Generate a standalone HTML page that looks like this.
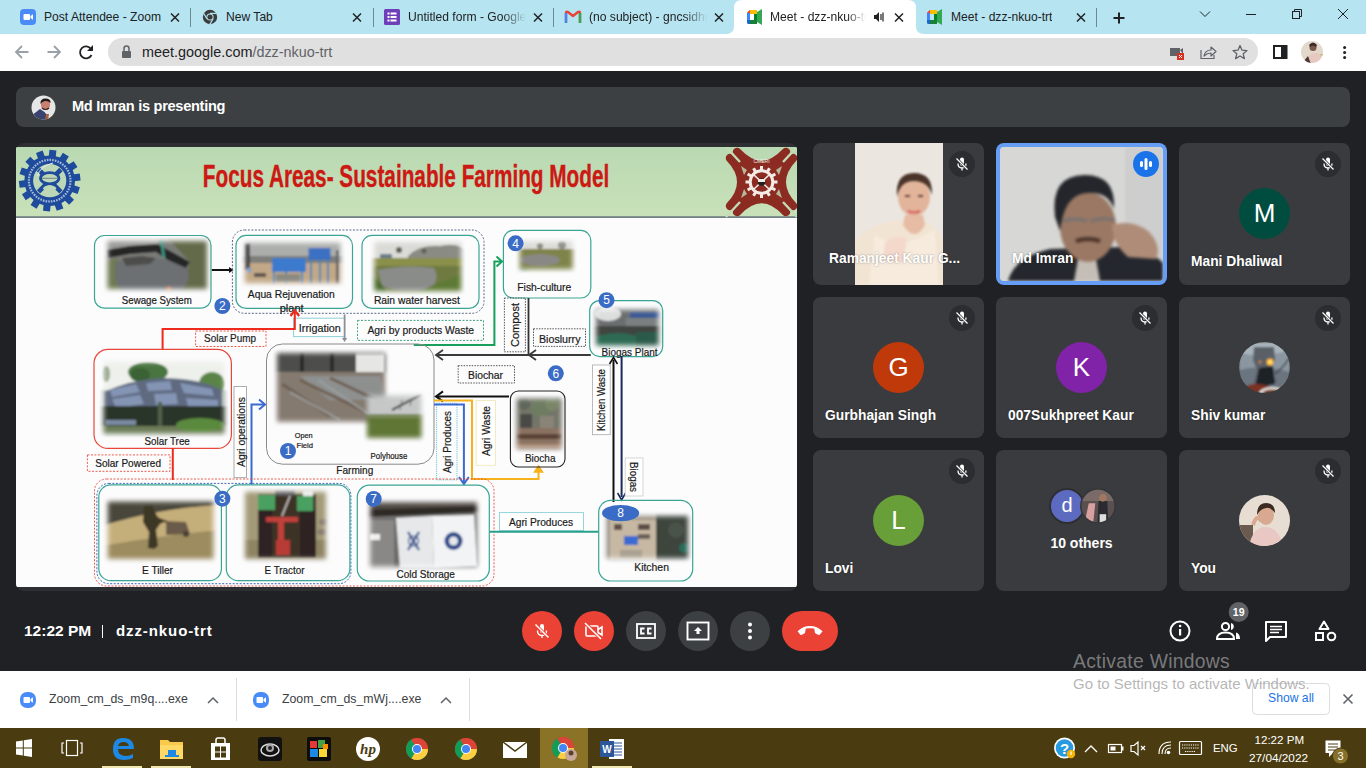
<!DOCTYPE html>
<html><head><meta charset="utf-8">
<style>
*{margin:0;padding:0;box-sizing:border-box}
html,body{width:1366px;height:768px;overflow:hidden;background:#202124;font-family:"Liberation Sans",sans-serif}
.abs{position:absolute}
#tabs{position:absolute;left:0;top:0;width:1366px;height:34px;background:#b6e5f1}
#toolbar{position:absolute;left:0;top:34px;width:1366px;height:36px;background:#fff}
#meet{position:absolute;left:0;top:70px;width:1366px;height:601px;background:#202124}
#shelf{position:absolute;left:0;top:671px;width:1366px;height:57px;background:#fff}
#taskbar{position:absolute;left:0;top:728px;width:1366px;height:40px;background:#4a3c10}
.tabt{position:absolute;top:10px;font-size:12.1px;color:#202124;white-space:nowrap;overflow:hidden;line-height:14px}
.fade{-webkit-mask-image:linear-gradient(90deg,#000 80%,transparent 100%)}
.x{position:absolute;top:10px;width:12px;height:12px}
.sep{position:absolute;top:8px;width:1px;height:20px;background:#5f7f88}
.tile{position:absolute;width:171px;height:142px;background:#3a3b3e;border-radius:8px;overflow:hidden}
.name{position:absolute;color:#fff;font-weight:bold;font-size:13.8px;white-space:nowrap;text-shadow:0 0 2px rgba(0,0,0,.4)}
.mic{position:absolute;right:9px;top:8px;width:26px;height:26px;border-radius:50%;background:#2e3134}
.av{position:absolute;left:60px;top:45px;width:51px;height:51px;border-radius:50%;color:#fff;font-size:26px;text-align:center;line-height:51px}
.ctl{position:absolute;top:540px;width:40px;height:40px;border-radius:50%;background:#3c4043}
</style></head><body>
<div id="tabs">
  <svg class="abs" style="left:0;top:0" width="1366" height="34">
    <!-- active tab -->
    <path d="M726,34 Q734,34 734,26 L734,8 Q734,0 742,0 L908,0 Q916,0 916,8 L916,26 Q916,34 924,34 Z" fill="#fff"/>
    <!-- separators -->
    <rect x="190" y="8" width="1" height="19" fill="#6c8a92"/>
    <rect x="373" y="8" width="1" height="19" fill="#6c8a92"/>
    <rect x="553" y="8" width="1" height="19" fill="#6c8a92"/>
    <rect x="1096" y="8" width="1" height="19" fill="#6c8a92"/>
    <!-- zoom icon -->
    <rect x="20" y="9" width="16" height="16" rx="4" fill="#4a8cf7"/>
    <rect x="23.5" y="14" width="6.5" height="6" rx="1" fill="#fff"/><path d="M30.5,16 L33,14.2 L33,19.8 L30.5,18 Z" fill="#fff"/>
    <!-- chrome gray -->
    <circle cx="210" cy="17" r="7.2" fill="#3c3c3c"/><circle cx="210" cy="17" r="3.6" fill="#b6e5f1"/><circle cx="210" cy="17" r="2.6" fill="#3c3c3c"/>
    <path d="M210,13.4 L216.5,13.4" stroke="#b6e5f1" stroke-width="1.2"/><path d="M206.9,18.8 L203.6,13.2" stroke="#b6e5f1" stroke-width="1.2"/><path d="M213.1,18.8 L209.8,24.4" stroke="#b6e5f1" stroke-width="1.2"/>
    <!-- forms -->
    <rect x="384" y="9" width="16" height="16" rx="1.5" fill="#6e3fb8"/>
    <rect x="387.5" y="12.5" width="2" height="2" fill="#fff"/><rect x="390.5" y="12.5" width="6" height="2" fill="#fff"/>
    <rect x="387.5" y="16" width="2" height="2" fill="#fff"/><rect x="390.5" y="16" width="6" height="2" fill="#fff"/>
    <rect x="387.5" y="19.5" width="2" height="2" fill="#fff"/><rect x="390.5" y="19.5" width="6" height="2" fill="#fff"/>
    <!-- gmail -->
    <path d="M566,23 L566,13 Q566,11 568,12 L573,16 L578,12 Q580,11 580,13 L580,23" fill="none" stroke="#ea4335" stroke-width="2.4" stroke-linejoin="round"/>
    <path d="M566,13 L566,23" stroke="#4285f4" stroke-width="2.4"/><path d="M580,13 L580,23" stroke="#34a853" stroke-width="2.4"/>
    <!-- meet icons -->
    <g id="mt" transform="translate(747,10)">
      <path d="M0,3 L3,0 L10,0 L10,4 L3,4 L3,10 L0,10 Z" fill="#ea4335"/>
      <path d="M3,0 L10,0 L10,4 L3,4 Z" fill="#fbbc04"/>
      <path d="M0,3 L3,3 L3,10 L0,10 Z" fill="#4285f4"/>
      <path d="M0,10 L10,10 L10,14 L2,14 Q0,14 0,12 Z" fill="#188038"/>
      <path d="M0,10 L3,10 L3,14 L2,14 Q0,14 0,12 Z" fill="#1967d2"/>
      <path d="M10,4 L10,10 L7,10 L7,4 Z" fill="#00832d"/>
      <path d="M10,2 L15,-1 L15,15 L10,12 Z" fill="#34a853"/>
      <path d="M3,0 L0,3 L3,3 Z" fill="#ea4335"/>
    </g>
    <use href="#mt" x="180" y="0"/>
    <!-- close X's -->
    <g stroke="#202124" stroke-width="1.5">
      <path d="M171,13.5 L179,21.5 M179,13.5 L171,21.5"/>
      <path d="M353,13.5 L361,21.5 M361,13.5 L353,21.5"/>
      <path d="M534,13.5 L542,21.5 M542,13.5 L534,21.5"/>
      <path d="M715,13.5 L723,21.5 M723,13.5 L715,21.5"/>
      <path d="M895,13.5 L903,21.5 M903,13.5 L895,21.5"/>
      <path d="M1077,13.5 L1085,21.5 M1085,13.5 L1077,21.5"/>
    </g>
    <!-- speaker -->
    <path d="M874,15 L876,15 L879,12 L879,22 L876,19 L874,19 Z" fill="#202124"/>
    <path d="M881,14 L881,20 M883,12.5 L883,21.5" stroke="#202124" stroke-width="1.2"/>
    <!-- plus -->
    <path d="M1119,12.5 L1119,23.5 M1113.5,18 L1124.5,18" stroke="#202124" stroke-width="2"/>
    <!-- window controls -->
    <path d="M1200,11.5 L1205,16.5 L1210,11.5" fill="none" stroke="#202124" stroke-width="1"/>
    <path d="M1246,14.5 L1256,14.5" stroke="#202124" stroke-width="1"/>
    <rect x="1292.5" y="11.5" width="7" height="7" fill="none" stroke="#202124" stroke-width="1"/>
    <path d="M1294.5,11.5 L1294.5,9.5 L1301.5,9.5 L1301.5,16.5 L1299.5,16.5" fill="none" stroke="#202124" stroke-width="1"/>
    <path d="M1338,9 L1348,19 M1348,9 L1338,19" stroke="#202124" stroke-width="1"/>
  </svg>
  <div class="tabt" style="left:44px;width:120px">Post Attendee - Zoom</div>
  <div class="tabt" style="left:226px">New Tab</div>
  <div class="tabt fade" style="left:408px;width:118px">Untitled form - Google Forms</div>
  <div class="tabt fade" style="left:589px;width:118px">(no subject) - gncsidhu@gmail.com</div>
  <div class="tabt fade" style="left:770px;width:96px">Meet - dzz-nkuo-trt</div>
  <div class="tabt" style="left:951px">Meet - dzz-nkuo-trt</div>
</div>
<div id="toolbar">
  <svg class="abs" style="left:0;top:0" width="1366" height="36">
    <path d="M28.5,18 L16,18 M22,12 L16,18 L22,24" fill="none" stroke="#9aa0a6" stroke-width="1.8"/>
    <path d="M47.5,18 L60,18 M54,12 L60,18 L54,24" fill="none" stroke="#9aa0a6" stroke-width="1.8"/>
    <path d="M91,15 A6,6 0 1 0 91.5,21" fill="none" stroke="#202124" stroke-width="1.8"/>
    <path d="M93,11 L93,17 L87,17 Z" fill="#202124"/>
    <rect x="108" y="4" width="1150" height="28" rx="14" fill="#e0e0e0"/>
    <rect x="122" y="17" width="9" height="7" rx="1" fill="#5f6368"/>
    <path d="M124,17 L124,14.5 A2.5,2.5 0 0 1 129,14.5 L129,17" fill="none" stroke="#5f6368" stroke-width="1.5"/>
    <rect x="1170" y="14" width="10" height="8" fill="#5f6368"/><path d="M1180,16 L1183,14 L1183,20" fill="#5f6368"/>
    <rect x="1177" y="19" width="7" height="7" fill="#d93025"/><path d="M1179,21 L1182,24 M1182,21 L1179,24" stroke="#fff" stroke-width="1"/>
    <path d="M1201,16 L1201,24.5 L1214,24.5 L1214,21" fill="none" stroke="#5f6368" stroke-width="1.2"/>
    <path d="M1204,22 Q1205,16 1211,16 L1211,13 L1216,17.5 L1211,22 L1211,19 Q1207,19 1204,22 Z" fill="none" stroke="#5f6368" stroke-width="1.2" stroke-linejoin="round"/>
    <path d="M1240,11.5 L1242,16.2 L1247,16.6 L1243.2,19.8 L1244.4,24.6 L1240,22 L1235.6,24.6 L1236.8,19.8 L1233,16.6 L1238,16.2 Z" fill="none" stroke="#5f6368" stroke-width="1.3" stroke-linejoin="round"/>
    <rect x="1274" y="12" width="12.5" height="12" fill="none" stroke="#202124" stroke-width="2"/><rect x="1281" y="12" width="6" height="12" fill="#202124"/>
    <defs><clipPath id="pav"><circle cx="1312" cy="18" r="11"/></clipPath><filter id="pbl"><feGaussianBlur stdDeviation="0.6"/></filter></defs>
    <g clip-path="url(#pav)"><g filter="url(#pbl)"><rect x="1300" y="6" width="24" height="24" fill="#e2d8cc"/>
    <path d="M1306,30 Q1308,20 1314,19 Q1322,19 1324,24 L1324,30 Z" fill="#e6c8c0"/>
    <circle cx="1313" cy="13.5" r="3.5" fill="#7a5848"/><path d="M1309,11 Q1313,6 1317,11 L1316,13 Q1313,10 1310,13 Z" fill="#3a2a28"/>
    <path d="M1303,28 L1308,22 L1311,30 Z" fill="#4a3a30"/><path d="M1320,20 L1324,20 L1324,24 Z" fill="#b8b070"/></g></g>
    <circle cx="1344.6" cy="13.5" r="1.5" fill="#202124"/><circle cx="1344.6" cy="18.5" r="1.5" fill="#202124"/><circle cx="1344.6" cy="23.5" r="1.5" fill="#202124"/>
  </svg>
  <div class="abs" style="left:142px;top:10px;font-size:14.4px;color:#202124;white-space:nowrap;line-height:17px">meet.google.com<span style="color:#5f6368">/dzz-nkuo-trt</span></div>
</div>
<div id="meet">
  <div class="abs" style="left:0;top:0;width:1366px;height:1px;background:#fff"></div>
  <div class="abs" style="left:16px;top:17px;width:1334px;height:40px;border-radius:8px;background:#3c4043"></div>
  <svg class="abs" style="left:31px;top:25px" width="25" height="25" viewBox="0 0 25 25">
    <defs><clipPath id="cav"><circle cx="12.5" cy="12.5" r="12"/></clipPath></defs>
    <circle cx="12.5" cy="12.5" r="12" fill="#e6e6e6"/>
    <g clip-path="url(#cav)" style="filter:blur(0.5px)"><path d="M0,21 L9,14 Q13,16 16,20 L15,26 L0,26 Z" fill="#3a4270"/><path d="M15,19 L18,19 L17,26 L14,26 Z" fill="#a86040"/><ellipse cx="14.5" cy="9.5" rx="4.6" ry="5.6" fill="#c88070"/><path d="M9.5,9 Q9,3.5 14.5,3.5 Q20,3.5 19.5,8 Q17,5.5 14,6 Q11,6.5 9.5,9Z" fill="#1e1a1a"/><path d="M11,13 Q14.5,16 18,13" stroke="#2a2020" stroke-width="1.2" fill="none"/></g>
  </svg>
  <div class="abs" style="left:72px;top:28px;font-size:14.6px;font-weight:bold;color:#fff;letter-spacing:-0.3px">Md Imran is presenting</div>
  <div class="abs" style="left:16px;top:73px;width:781px;height:448px;border-radius:8px;background:#2e2f32;overflow:hidden">
    <div id="slide" class="abs" style="left:0;top:4px;width:781px;height:440px;background:#fdfcfd;overflow:hidden"><svg class="abs" style="left:0;top:0" width="781" height="440" viewBox="16 147 781 440" font-family="Liberation Sans, sans-serif">
<defs><filter id="bl" x="-5%" y="-5%" width="110%" height="110%"><feGaussianBlur stdDeviation="0.9"/></filter><filter id="bl2"><feGaussianBlur stdDeviation="1"/></filter><filter id="sf" x="-20%" y="-20%" width="140%" height="140%"><feGaussianBlur stdDeviation="2.4"/></filter>
<linearGradient id="hg" x1="0" y1="0" x2="0" y2="1"><stop offset="0" stop-color="#b9d9b2"/><stop offset="1" stop-color="#c9e1b9"/></linearGradient>
<marker id="ab" markerWidth="8" markerHeight="8" refX="6" refY="4" orient="auto" markerUnits="userSpaceOnUse"><path d="M0,0 L6,4 L0,8" fill="none" stroke="context-stroke" stroke-width="1.6"/></marker>
</defs>
<rect x="16" y="147" width="781" height="440" fill="#fcfcfd"/>
<rect x="16" y="147" width="781" height="70" fill="url(#hg)"/>
<rect x="16" y="216.5" width="781" height="1.2" fill="#3d4a58"/>
<text x="202.8" y="187.4" font-size="31.5" font-weight="bold" fill="#cc1914" stroke="#cc1914" stroke-width="0.4" textLength="406.5" lengthAdjust="spacingAndGlyphs">Focus Areas- Sustainable Farming Model</text>
<g><rect x="46.2" y="150" width="7" height="9" fill="#1f4b9c" transform="rotate(6.0 49.7 180.7)"/><rect x="46.2" y="150" width="7" height="9" fill="#1f4b9c" transform="rotate(31.714285714285715 49.7 180.7)"/><rect x="46.2" y="150" width="7" height="9" fill="#1f4b9c" transform="rotate(57.42857142857143 49.7 180.7)"/><rect x="46.2" y="150" width="7" height="9" fill="#1f4b9c" transform="rotate(83.14285714285714 49.7 180.7)"/><rect x="46.2" y="150" width="7" height="9" fill="#1f4b9c" transform="rotate(108.85714285714286 49.7 180.7)"/><rect x="46.2" y="150" width="7" height="9" fill="#1f4b9c" transform="rotate(134.57142857142858 49.7 180.7)"/><rect x="46.2" y="150" width="7" height="9" fill="#1f4b9c" transform="rotate(160.28571428571428 49.7 180.7)"/><rect x="46.2" y="150" width="7" height="9" fill="#1f4b9c" transform="rotate(186.0 49.7 180.7)"/><rect x="46.2" y="150" width="7" height="9" fill="#1f4b9c" transform="rotate(211.71428571428572 49.7 180.7)"/><rect x="46.2" y="150" width="7" height="9" fill="#1f4b9c" transform="rotate(237.42857142857142 49.7 180.7)"/><rect x="46.2" y="150" width="7" height="9" fill="#1f4b9c" transform="rotate(263.14285714285717 49.7 180.7)"/><rect x="46.2" y="150" width="7" height="9" fill="#1f4b9c" transform="rotate(288.85714285714283 49.7 180.7)"/><rect x="46.2" y="150" width="7" height="9" fill="#1f4b9c" transform="rotate(314.57142857142856 49.7 180.7)"/><rect x="46.2" y="150" width="7" height="9" fill="#1f4b9c" transform="rotate(340.2857142857143 49.7 180.7)"/><circle cx="49.7" cy="180.7" r="25.3" fill="#1f4b9c"/><circle cx="49.7" cy="180.7" r="20.8" fill="none" stroke="#d6e2ee" stroke-width="2.2" stroke-dasharray="1.6,1.1" opacity="0.75"/><circle cx="49.7" cy="180.7" r="16.6" fill="#bcd8b6"/><path d="M38.5,169.5 L60.9,191.9 M60.9,169.5 L38.5,191.9" stroke="#1f4b9c" stroke-width="4.6"/><ellipse cx="49.7" cy="178.3" rx="9.2" ry="5.6" fill="#bcd8b6" stroke="#1f4b9c" stroke-width="2.8"/><path d="M42,178.3 L57.5,178.3" stroke="#6a7a8a" stroke-width="0.9"/><ellipse cx="49.7" cy="188.3" rx="6.5" ry="3" fill="#bcd8b6"/><path d="M37.5,176 Q40,166 53,163" fill="none" stroke="#e8eef0" stroke-width="1"/></g>
<g fill="none" stroke="#8c2b22" stroke-width="8.5" stroke-linecap="round"><path d="M737,152 Q761.5,178 786,152"/><path d="M730,158 Q753,182 730,206"/><path d="M793,158 Q770,182 793,206"/><path d="M737,212 Q761.5,186 786,212"/></g>
<path d="M737,152 Q761.5,178 786,152 L793,158 Q770,182 793,206 L786,212 Q761.5,186 737,212 L730,206 Q753,182 730,158 Z" fill="#8c2b22"/>
<path d="M741,166 L747,170 L744,175 Z M782,166 L776,170 L779,175 Z M741,198 L747,194 L744,189 Z M782,198 L776,194 L779,189 Z" fill="#c2dcb6" opacity="0.8"/>
<path d="M726,147 L740,162 M797,147 L783,162 M726,217 L740,202 M797,217 L783,202" stroke="#c2dcb6" stroke-width="2.4"/>
<rect x="760" y="166" width="3" height="4.5" fill="#f2ebe6" transform="rotate(0 761.5 182)"/><rect x="760" y="166" width="3" height="4.5" fill="#f2ebe6" transform="rotate(30 761.5 182)"/><rect x="760" y="166" width="3" height="4.5" fill="#f2ebe6" transform="rotate(60 761.5 182)"/><rect x="760" y="166" width="3" height="4.5" fill="#f2ebe6" transform="rotate(90 761.5 182)"/><rect x="760" y="166" width="3" height="4.5" fill="#f2ebe6" transform="rotate(120 761.5 182)"/><rect x="760" y="166" width="3" height="4.5" fill="#f2ebe6" transform="rotate(150 761.5 182)"/><rect x="760" y="166" width="3" height="4.5" fill="#f2ebe6" transform="rotate(180 761.5 182)"/><rect x="760" y="166" width="3" height="4.5" fill="#f2ebe6" transform="rotate(210 761.5 182)"/><rect x="760" y="166" width="3" height="4.5" fill="#f2ebe6" transform="rotate(240 761.5 182)"/><rect x="760" y="166" width="3" height="4.5" fill="#f2ebe6" transform="rotate(270 761.5 182)"/><rect x="760" y="166" width="3" height="4.5" fill="#f2ebe6" transform="rotate(300 761.5 182)"/><rect x="760" y="166" width="3" height="4.5" fill="#f2ebe6" transform="rotate(330 761.5 182)"/>
<circle cx="761.5" cy="182" r="12.8" fill="#f2ebe6"/><circle cx="761.5" cy="182" r="9.8" fill="#8c2b22"/><path d="M754,175 L769,189 M769,175 L754,189" stroke="#f2ebe6" stroke-width="1.6"/><circle cx="761.5" cy="182" r="3.8" fill="#222"/><rect x="758" y="179" width="7" height="3" fill="#f2ebe6"/>
<text x="761.5" y="163" font-size="5" fill="#f2ebe6" text-anchor="middle">CMERI</text>
<rect x="94.5" y="235.5" width="116.5" height="72.7" rx="10" fill="none" stroke="#3aa595" stroke-width="1.2"/>
<mask id="msw" maskUnits="userSpaceOnUse" x="95.5" y="229" width="123.5" height="72"><rect x="107.5" y="241" width="99.5" height="48" fill="#fff" filter="url(#sf)"/></mask>
<g mask="url(#msw)"><g filter="url(#bl)"><rect x="102.5" y="236" width="109.5" height="58" fill="#7a7a76"/><rect x="102" y="236" width="110" height="60" fill="#7a7a76"/><path d="M104,236 L160,236 L156,248 L104,254 Z" fill="#9a9a96"/><path d="M166,236 L212,236 L212,296 L176,296 Q186,276 190,262 Z" fill="#626a4a"/><path d="M104,262 L118,258 L122,296 L104,296 Z" fill="#6e7a52"/><path d="M116,262 Q150,252 186,266 Q194,280 178,294 L124,296 Q112,280 116,262 Z" fill="#6c7072"/><path d="M106,250 L130,246 L157,244 L172,252 L190,262 L186,268 L168,260 L156,252 L130,254 L108,258 Z" fill="#262626"/><path d="M122,258 L142,256 L156,258 L150,264 L126,266 Z" fill="#4e4e4c"/><path d="M161,238 L164,258" stroke="#3a9a88" stroke-width="2.5"/><circle cx="169" cy="289" r="2.5" fill="#c87a40"/></g></g>
<text x="121.8" y="304.4" font-size="11" fill="#1a1a1a" stroke="#1a1a1a" stroke-width="0.2" text-anchor="start" textLength="70" lengthAdjust="spacingAndGlyphs" >Sewage System</text>
<path d="M211.8,270 L232,270" stroke="#111" stroke-width="2"/><path d="M229,267 L233.5,270 L229,273 Z" fill="#111"/>
<rect x="232.4" y="230" width="251.6" height="83.3" rx="12" fill="none" stroke="#5a6a88" stroke-width="1" stroke-dasharray="2,1.5"/>
<rect x="236" y="235.4" width="116.5" height="73" rx="10" fill="none" stroke="#3aa595" stroke-width="1.2"/>
<mask id="maq" maskUnits="userSpaceOnUse" x="232.8" y="230.7" width="119.8" height="64.5"><rect x="244.8" y="242.7" width="95.8" height="40.5" fill="#fff" filter="url(#sf)"/></mask>
<g mask="url(#maq)"><g filter="url(#bl)"><rect x="239.8" y="237.7" width="105.8" height="50.5" fill="#b0a89a"/><rect x="240" y="238" width="106" height="22" fill="#acaeac"/><rect x="240" y="256" width="106" height="7" fill="#7e7e7a"/><rect x="240" y="263" width="106" height="25" fill="#c2a886"/><rect x="244" y="243" width="6" height="27" fill="#3a3a3a"/><rect x="272" y="258" width="34" height="14" fill="#3a7acc"/><path d="M274,272 L274,284 M286,272 L286,284 M302,272 L302,284" stroke="#3a8aba" stroke-width="2"/><rect x="276" y="274" width="24" height="8" fill="#8a8a80"/><rect x="308.5" y="248" width="22" height="12" fill="#3a70c2"/><path d="M311,260 L311,284 M320,260 L320,284 M328,260 L328,284" stroke="#3a88b4" stroke-width="2"/><rect x="336" y="250" width="3" height="34" fill="#5a5a5a"/><rect x="254" y="273" width="12" height="4" fill="#5a5550"/><circle cx="249" cy="270" r="2.5" fill="#7aa0c8"/></g></g>
<text x="247.8" y="298" font-size="11" fill="#1a1a1a" stroke="#1a1a1a" stroke-width="0.2" text-anchor="start" textLength="87" lengthAdjust="spacingAndGlyphs" >Aqua Rejuvenation</text>
<text x="291.7" y="312" font-size="11" fill="#1a1a1a" stroke="#1a1a1a" stroke-width="0.2" text-anchor="middle" textLength="24" lengthAdjust="spacingAndGlyphs" >plant</text>
<rect x="362" y="235.4" width="117" height="73" rx="10" fill="none" stroke="#3aa595" stroke-width="1.2"/>
<mask id="mrn" maskUnits="userSpaceOnUse" x="362.3" y="229.8" width="110.9" height="73.2"><rect x="374.3" y="241.8" width="86.9" height="49.2" fill="#fff" filter="url(#sf)"/></mask>
<g mask="url(#mrn)"><g filter="url(#bl)"><rect x="369.3" y="236.8" width="96.9" height="59.2" fill="#8a9a70"/><rect x="370" y="236" width="96" height="24" fill="#dadad6"/><path d="M408,256 Q420,244 440,246 Q456,242 466,250 L466,262 L408,262 Z" fill="#8a8c84"/><circle cx="399" cy="250" r="3" fill="#5a6050"/><circle cx="424" cy="251" r="2.5" fill="#5a6050"/><rect x="380" y="254" width="12" height="4" fill="#6a7a8a"/><rect x="370" y="258" width="96" height="8" fill="#8a9048"/><rect x="370" y="266" width="96" height="30" fill="#6e7a40"/><path d="M378,270 Q405,264 434,268 Q440,278 432,288 Q404,294 382,286 Z" fill="#8a8c8a"/><path d="M370,276 Q382,280 388,296 L370,296 Z" fill="#4a6a2c"/><path d="M420,292 Q440,280 466,274 L466,296 L410,296 Z" fill="#5e7a36"/></g></g>
<text x="373.9" y="304" font-size="11" fill="#1a1a1a" stroke="#1a1a1a" stroke-width="0.2" text-anchor="start" textLength="86" lengthAdjust="spacingAndGlyphs" >Rain water harvest</text>
<ellipse cx="222.4" cy="306" rx="8" ry="8" fill="#3a6cc6"/>
<text x="222.4" y="310.2" font-size="12" fill="#fff" text-anchor="middle">2</text>
<rect x="195.6" y="331" width="70.4" height="15.5" rx="0" fill="none" stroke="#e84a3a" stroke-width="0.9" stroke-dasharray="2,1.5"/>
<text x="204" y="342" font-size="11" fill="#1a1a1a" stroke="#1a1a1a" stroke-width="0.2" text-anchor="start" textLength="52" lengthAdjust="spacingAndGlyphs" >Solar Pump</text>
<rect x="293.6" y="318.2" width="51" height="18.4" fill="#fff" stroke="#8fd0d8" stroke-width="1"/>
<text x="298.8" y="332.2" font-size="11" fill="#1a1a1a" stroke="#1a1a1a" stroke-width="0.2" text-anchor="start" textLength="42" lengthAdjust="spacingAndGlyphs" >Irrigation</text>
<path d="M344.6,314.5 L344.6,340" stroke="#8a8f98" stroke-width="1.8"/><path d="M342,338 L344.6,342 L347.2,338 Z" fill="#8a8f98"/>
<path d="M162.6,349.5 L162.6,329 L294.8,329 L294.8,312" fill="none" stroke="#ee2a1c" stroke-width="2"/>
<path d="M290.5,316 L294.8,310.5 L299.1,316" fill="none" stroke="#ee2a1c" stroke-width="2.2"/>
<rect x="357.5" y="320.4" width="126" height="20" rx="0" fill="none" stroke="#2a9a6a" stroke-width="0.9" stroke-dasharray="2,1.5"/>
<text x="367.4" y="334.2" font-size="11" fill="#1a1a1a" stroke="#1a1a1a" stroke-width="0.2" text-anchor="start" textLength="106.7" lengthAdjust="spacingAndGlyphs" >Agri by products Waste</text>
<path d="M413.8,345 L494.4,345 L494.4,261.5 L501,261.5" fill="none" stroke="#17a05a" stroke-width="2"/>
<path d="M496.5,256.5 L502,261.5 L496.5,266.5" fill="none" stroke="#17a05a" stroke-width="2"/>
<rect x="503.4" y="230.4" width="87.4" height="67.6" rx="10" fill="none" stroke="#3aa595" stroke-width="1.2"/>
<mask id="mfs" maskUnits="userSpaceOnUse" x="507.79999999999995" y="229" width="76.9" height="52.2"><rect x="519.8" y="241" width="52.9" height="28.200000000000003" fill="#fff" filter="url(#sf)"/></mask>
<g mask="url(#mfs)"><g filter="url(#bl)"><rect x="514.8" y="236" width="62.9" height="38.2" fill="#9a9a80"/><rect x="515" y="236" width="62" height="13" fill="#dcdcd8"/><circle cx="540" cy="246" r="3" fill="#8a8a80"/><circle cx="562" cy="245" r="4" fill="#909088"/><rect x="515" y="249" width="62" height="25" fill="#7e8448"/><ellipse cx="540" cy="260" rx="20" ry="6" fill="#8a8884"/><path d="M515,266 L530,270 L525,274 L515,274 Z" fill="#4e6a30"/></g></g>
<text x="517.3" y="290.5" font-size="11" fill="#1a1a1a" stroke="#1a1a1a" stroke-width="0.2" text-anchor="start" textLength="54" lengthAdjust="spacingAndGlyphs" >Fish-culture</text>
<ellipse cx="515.6" cy="243.3" rx="8" ry="8" fill="#3a6cc6"/>
<text x="515.6" y="247.5" font-size="12" fill="#fff" text-anchor="middle">4</text>
<rect x="504.4" y="298" width="21" height="53.8" rx="0" fill="none" stroke="#444" stroke-width="0.9" stroke-dasharray="1.5,1.2"/>
<text x="0" y="0" font-size="11" fill="#1a1a1a" stroke="#1a1a1a" stroke-width="0.2" text-anchor="middle" dominant-baseline="central" transform="translate(515.2,325) rotate(-90)" textLength="44" lengthAdjust="spacingAndGlyphs">Compost</text>
<path d="M528.5,298 L528.5,355" stroke="#333" stroke-width="1.8"/>
<path d="M590.8,355 L437,355" stroke="#3a3a3a" stroke-width="1.8"/>
<path d="M443,350 L436,355 L443,360" fill="none" stroke="#3a3a3a" stroke-width="1.8"/>
<path d="M536,350 L529,355 L536,360" fill="none" stroke="#3a3a3a" stroke-width="1.8"/>
<rect x="533.5" y="328.8" width="52" height="17.6" rx="0" fill="none" stroke="#444" stroke-width="0.9" stroke-dasharray="1.5,1.2"/>
<text x="539" y="342.7" font-size="11" fill="#1a1a1a" stroke="#1a1a1a" stroke-width="0.2" text-anchor="start" textLength="41.5" lengthAdjust="spacingAndGlyphs" >Bioslurry</text>
<rect x="589.7" y="300.6" width="73" height="56" rx="10" fill="none" stroke="#3aa595" stroke-width="1.2"/>
<mask id="mbg" maskUnits="userSpaceOnUse" x="584" y="297.7" width="86.6" height="59.8"><rect x="596" y="309.7" width="62.599999999999994" height="35.8" fill="#fff" filter="url(#sf)"/></mask>
<g mask="url(#mbg)"><g filter="url(#bl)"><rect x="591" y="304.7" width="72.6" height="45.8" fill="#505a58"/><rect x="590" y="304" width="74" height="22" fill="#6a6e6e"/><ellipse cx="608" cy="314" rx="13" ry="7" fill="#dcdede"/><rect x="630" y="312" width="30" height="6" fill="#3a5a94"/><rect x="626" y="318" width="34" height="8" fill="#7a8080"/><rect x="590" y="326" width="74" height="10" fill="#3f4440"/><path d="M596,336 Q620,330 636,336 L636,350 L596,350 Z" fill="#2e6a52"/><rect x="636" y="332" width="26" height="18" fill="#2a5a48"/></g></g>
<text x="601.6" y="356" font-size="11" fill="#1a1a1a" stroke="#1a1a1a" stroke-width="0.2" text-anchor="start" textLength="56" lengthAdjust="spacingAndGlyphs" >Biogas Plant</text>
<ellipse cx="606.5" cy="300.2" rx="8" ry="8" fill="#3a6cc6"/>
<text x="606.5" y="304.4" font-size="12" fill="#fff" text-anchor="middle">5</text>
<rect x="458.2" y="365.7" width="56.3" height="17.3" rx="0" fill="none" stroke="#444" stroke-width="0.9" stroke-dasharray="1.5,1.2"/>
<text x="468" y="378.6" font-size="11" fill="#1a1a1a" stroke="#1a1a1a" stroke-width="0.2" text-anchor="start" textLength="35" lengthAdjust="spacingAndGlyphs" >Biochar</text>
<ellipse cx="555.8" cy="373.3" rx="8" ry="8" fill="#3a6cc6"/>
<text x="555.8" y="377.5" font-size="12" fill="#fff" text-anchor="middle">6</text>
<rect x="592.4" y="365" width="17.8" height="69.7" fill="#fff" stroke="#aaa" stroke-width="0.8"/>
<text x="0" y="0" font-size="11" fill="#1a1a1a" stroke="#1a1a1a" stroke-width="0.2" text-anchor="middle" dominant-baseline="central" transform="translate(601.3,400) rotate(-90)" textLength="62" lengthAdjust="spacingAndGlyphs">Kitchen Waste</text>
<path d="M613.5,502 L613.5,360" stroke="#111" stroke-width="2"/>
<path d="M609.5,364 L613.5,357.5 L617.5,364" fill="none" stroke="#111" stroke-width="1.6"/>
<path d="M621.6,356 L621.6,497" stroke="#1a2a5a" stroke-width="2"/>
<path d="M617.6,493 L621.6,500 L625.6,493" fill="none" stroke="#1a2a5a" stroke-width="1.6"/>
<rect x="625.2" y="458" width="17.8" height="38" fill="#fff" stroke="#ccc" stroke-width="0.8"/>
<text x="0" y="0" font-size="11" fill="#1a1a1a" stroke="#1a1a1a" stroke-width="0.2" text-anchor="middle" dominant-baseline="central" transform="translate(634,477) rotate(90)" textLength="30" lengthAdjust="spacingAndGlyphs">Biogas</text>
<rect x="94" y="349.4" width="137.4" height="99" rx="14" fill="none" stroke="#e8463a" stroke-width="1.2"/>
<mask id="mst" maskUnits="userSpaceOnUse" x="91.5" y="349.5" width="145" height="96.2"><rect x="103.5" y="361.5" width="121" height="72.2" fill="#fff" filter="url(#sf)"/></mask>
<g mask="url(#mst)"><g filter="url(#bl)"><rect x="98.5" y="356.5" width="131" height="82.2" fill="#9aa4a0"/><rect x="98" y="356" width="132" height="34" fill="#eef0ec"/><ellipse cx="148" cy="372" rx="20" ry="10" fill="#4a7440"/><ellipse cx="140" cy="375" rx="10" ry="7" fill="#3a6234"/><ellipse cx="212" cy="384" rx="13" ry="12" fill="#5a8446"/><ellipse cx="106" cy="374" rx="4" ry="8" fill="#9aa890"/><path d="M104,392 Q130,380 160,378 Q200,378 222,390 L222,408 Q160,412 104,406 Z" fill="#5e6a80"/><path d="M110,390 L136,384 L140,392 L112,397 Z M146,383 L170,381 L172,390 L148,391 Z M180,383 L212,389 L214,396 L184,393 Z M112,399 L140,395 L144,404 L116,408 Z M154,394 L176,393 L178,404 L156,405 Z M186,398 L218,400 L218,407 L188,406 Z" fill="#8494b4"/><rect x="98" y="406" width="132" height="22" fill="#2c362a"/><rect x="158" y="402" width="4" height="26" fill="#506048"/><rect x="98" y="426" width="132" height="12" fill="#6a7a54"/><rect x="106" y="420" width="30" height="5" fill="#7a8aa0"/><ellipse cx="200" cy="425" rx="24" ry="7" fill="#5a8a3c"/></g></g>
<text x="144.5" y="444.5" font-size="11" fill="#1a1a1a" stroke="#1a1a1a" stroke-width="0.2" text-anchor="start" textLength="45.3" lengthAdjust="spacingAndGlyphs" >Solar Tree</text>
<path d="M172.8,448.4 L172.8,480" stroke="#ee2a1c" stroke-width="2"/>
<rect x="87.4" y="454.9" width="82.6" height="16.4" rx="0" fill="none" stroke="#e84a3a" stroke-width="0.9" stroke-dasharray="2,1.5"/>
<text x="95.2" y="466.6" font-size="11" fill="#1a1a1a" stroke="#1a1a1a" stroke-width="0.2" text-anchor="start" textLength="65.8" lengthAdjust="spacingAndGlyphs" >Solar Powered</text>
<rect x="234" y="386.5" width="12.5" height="91.2" fill="#fff" stroke="#999" stroke-width="0.8"/>
<text x="0" y="0" font-size="11" fill="#1a1a1a" stroke="#1a1a1a" stroke-width="0.2" text-anchor="middle" dominant-baseline="central" transform="translate(240.5,432) rotate(-90)" textLength="70" lengthAdjust="spacingAndGlyphs">Agri operations</text>
<path d="M251.5,484.6 L251.5,404.5 L264,404.5" fill="none" stroke="#3a6ad0" stroke-width="2"/>
<path d="M259,399.5 L265,404.5 L259,409.5" fill="none" stroke="#3a6ad0" stroke-width="2"/>
<rect x="266.5" y="344" width="167.5" height="120.2" rx="16" fill="none" stroke="#8a8a8a" stroke-width="1"/>
<mask id="mof" maskUnits="userSpaceOnUse" x="265" y="341" width="132" height="92.8"><rect x="277" y="353" width="108" height="68.8" fill="#fff" filter="url(#sf)"/></mask>
<g mask="url(#mof)"><g filter="url(#bl)"><rect x="272" y="348" width="118" height="78.8" fill="#7a746c"/><rect x="272" y="348" width="118" height="24" fill="#4e4e4c"/><rect x="300" y="352" width="4" height="20" fill="#2a2a2a"/><rect x="330" y="352" width="4" height="20" fill="#2a2a2a"/><rect x="356" y="354" width="28" height="18" fill="#e6e6e4"/><rect x="356" y="352" width="28" height="3" fill="#9a9a98"/><rect x="272" y="372" width="118" height="54" fill="#857a70"/><path d="M300,376 L380,376 L385,400 L330,400 Z" fill="#8e9090"/><path d="M282,384 L330,416 M300,380 L370,414 M330,378 L385,404" stroke="#6e5e50" stroke-width="3"/><path d="M290,392 L340,420 M318,380 L378,420" stroke="#9aa0a0" stroke-width="2"/></g></g>
<mask id="mph" maskUnits="userSpaceOnUse" x="355" y="383.5" width="78.5" height="66.5"><rect x="367" y="395.5" width="54.5" height="42.5" fill="#fff" filter="url(#sf)"/></mask>
<g mask="url(#mph)"><g filter="url(#bl)"><rect x="362" y="390.5" width="64.5" height="52.5" fill="#b0b4b0"/><rect x="362" y="390" width="64" height="24" fill="#c6c8c8"/><path d="M392,410 L422,394" stroke="#4a4a4a" stroke-width="2"/><path d="M400,410 L402,400 M410,406 L412,398" stroke="#666" stroke-width="1"/><rect x="362" y="414" width="64" height="30" fill="#607634"/><rect x="362" y="414" width="64" height="4" fill="#7a8a5a"/></g></g>
<text x="294.7" y="438" font-size="8" fill="#1a1a1a" stroke="#1a1a1a" stroke-width="0.2" text-anchor="start" textLength="18" lengthAdjust="spacingAndGlyphs" >Open</text>
<text x="296.5" y="448" font-size="8" fill="#1a1a1a" stroke="#1a1a1a" stroke-width="0.2" text-anchor="start" textLength="16.5" lengthAdjust="spacingAndGlyphs" >Field</text>
<text x="370.6" y="459" font-size="8.5" fill="#1a1a1a" stroke="#1a1a1a" stroke-width="0.2" text-anchor="start" textLength="36.7" lengthAdjust="spacingAndGlyphs" >Polyhouse</text>
<text x="336.3" y="474.3" font-size="11" fill="#1a1a1a" stroke="#1a1a1a" stroke-width="0.2" text-anchor="start" textLength="37" lengthAdjust="spacingAndGlyphs" >Farming</text>
<ellipse cx="288" cy="451" rx="8" ry="8" fill="#3a6cc6"/>
<text x="288" y="455.2" font-size="12" fill="#fff" text-anchor="middle">1</text>
<path d="M509,396.4 L437,396.4" stroke="#111" stroke-width="2"/>
<path d="M443,391.4 L436,396.4 L443,401.4" fill="none" stroke="#111" stroke-width="2"/>
<rect x="436.6" y="403.2" width="20.4" height="76.6" fill="none" stroke="#4ab8c8" stroke-width="0.8" stroke-dasharray="1.2,1"/>
<text x="0" y="0" font-size="11" fill="#1a1a1a" stroke="#1a1a1a" stroke-width="0.2" text-anchor="middle" dominant-baseline="central" transform="translate(447,442) rotate(-90)" textLength="62" lengthAdjust="spacingAndGlyphs">Agri Produces</text>
<path d="M434,400.5 L472,400.5 L472,479 L538.5,479 L538.5,469" fill="none" stroke="#f5b21a" stroke-width="2"/>
<path d="M534.5,472 L538.5,466 L542.5,472 Z" fill="#f5b21a" stroke="#f5b21a" stroke-width="1.5"/>
<path d="M434,404.6 L463.9,404.6 L463.9,482" fill="none" stroke="#3a6ad0" stroke-width="2"/>
<path d="M459,477 L463.9,484 L468.8,477" fill="none" stroke="#3a6ad0" stroke-width="2"/>
<rect x="476.2" y="400.5" width="19.2" height="64.8" fill="#fff" stroke="#f0e8b8" stroke-width="0.9"/>
<text x="0" y="0" font-size="11" fill="#1a1a1a" stroke="#1a1a1a" stroke-width="0.2" text-anchor="middle" dominant-baseline="central" transform="translate(485.8,431) rotate(-90)" textLength="50" lengthAdjust="spacingAndGlyphs">Agri Waste</text>
<rect x="510.4" y="391" width="54.6" height="76" rx="8" fill="none" stroke="#222" stroke-width="1.1"/>
<mask id="mbc" maskUnits="userSpaceOnUse" x="504.5" y="386.4" width="69.2" height="74.6"><rect x="516.5" y="398.4" width="45.2" height="50.6" fill="#fff" filter="url(#sf)"/></mask>
<g mask="url(#mbc)"><g filter="url(#bl)"><rect x="511.5" y="393.4" width="55.2" height="60.6" fill="#707068"/><rect x="512" y="394" width="54" height="36" fill="#727468"/><circle cx="540" cy="408" r="10" fill="#6e7c62"/><circle cx="552" cy="404" r="7" fill="#7a8668"/><circle cx="524" cy="404" r="6" fill="#5e665a"/><rect x="520" y="414" width="12" height="16" fill="#4a4a46"/><rect x="540" y="416" width="14" height="12" fill="#8a8478"/><rect x="512" y="428" width="54" height="26" fill="#8a7262"/><rect x="516" y="434" width="46" height="5" fill="#5a4236"/><rect x="516" y="444" width="46" height="4" fill="#a88c74"/></g></g>
<text x="524.9" y="461.5" font-size="11" fill="#1a1a1a" stroke="#1a1a1a" stroke-width="0.2" text-anchor="start" textLength="30.6" lengthAdjust="spacingAndGlyphs" >Biocha</text>
<rect x="94.5" y="479" width="399.5" height="107" rx="12" fill="none" stroke="#e84a3a" stroke-width="0.9" stroke-dasharray="2,1.5"/>
<rect x="96.9" y="483.4" width="254" height="100.3" rx="12" fill="none" stroke="#2a5ab0" stroke-width="0.9" stroke-dasharray="2,1.5"/>
<rect x="98.8" y="484.8" width="122.6" height="95.9" rx="12" fill="none" stroke="#3aa595" stroke-width="1.2"/>
<mask id="met" maskUnits="userSpaceOnUse" x="95.8" y="489.6" width="129.7" height="81.4"><rect x="107.8" y="501.6" width="105.7" height="57.4" fill="#fff" filter="url(#sf)"/></mask>
<g mask="url(#met)"><g filter="url(#bl)"><rect x="102.8" y="496.6" width="115.7" height="67.4" fill="#a8966a"/><rect x="102" y="496" width="118" height="70" fill="#a8966a"/><path d="M102,496 L220,496 L220,505 Q160,508 102,526 Z" fill="#4a463a"/><path d="M102,526 Q160,508 220,505 L220,530 Q160,536 102,546 Z" fill="#c4ae7a"/><path d="M102,546 Q160,536 220,530 L220,566 L102,566 Z" fill="#9c8c5e"/><path d="M144,506 L152,505 L157,516 L164,522 L160,524 L156,530 L158,546 L154,549 L148,548 L149,532 L143,522 Z" fill="#3e3828"/><path d="M156,518 L170,523" stroke="#3e3828" stroke-width="2.2"/><path d="M166,521 L186,522 L190,534 L166,535 Z" fill="#6a5a48"/><circle cx="186" cy="534" r="3" fill="#4a4038"/></g></g>
<text x="142" y="574.4" font-size="11" fill="#1a1a1a" stroke="#1a1a1a" stroke-width="0.2" text-anchor="start" textLength="31" lengthAdjust="spacingAndGlyphs" >E Tiller</text>
<rect x="226.3" y="484.8" width="123.6" height="95.9" rx="12" fill="none" stroke="#3aa595" stroke-width="1.2"/>
<mask id="mtr" maskUnits="userSpaceOnUse" x="233" y="479.8" width="105" height="91.2"><rect x="245" y="491.8" width="81" height="67.2" fill="#fff" filter="url(#sf)"/></mask>
<g mask="url(#mtr)"><g filter="url(#bl)"><rect x="240" y="486.8" width="91" height="77.2" fill="#a29a78"/><rect x="240" y="486" width="92" height="80" fill="#a29a78"/><rect x="240" y="540" width="92" height="26" fill="#8e8464"/><rect x="258" y="494" width="58" height="64" fill="#3e3028"/><rect x="258" y="510" width="14" height="48" fill="#2e2420"/><rect x="300" y="510" width="16" height="48" fill="#2e2420"/><rect x="258" y="495" width="17" height="15" fill="#4aa060"/><rect x="297" y="496" width="16" height="15" fill="#4aa060"/><rect x="275" y="489" width="20" height="7" fill="#4a4a4a"/><rect x="303" y="491" width="10" height="5" fill="#e8e8e8"/><path d="M266,517 L298,517 L298,522 L284,522 L284,540 L278,540 L278,522 L266,522 Z" fill="#c0403a"/><rect x="276" y="540" width="14" height="15" fill="#b83a34"/><path d="M282,516 L290,496" stroke="#e0e0e0" stroke-width="1.3"/><ellipse cx="324" cy="522" rx="5" ry="3" fill="#8a7a70"/><ellipse cx="322" cy="532" rx="5" ry="3" fill="#8a7a70"/></g></g>
<text x="264.5" y="574.4" font-size="11" fill="#1a1a1a" stroke="#1a1a1a" stroke-width="0.2" text-anchor="start" textLength="40" lengthAdjust="spacingAndGlyphs" >E Tractor</text>
<ellipse cx="222.4" cy="498.7" rx="8" ry="8" fill="#3a6cc6"/>
<text x="222.4" y="502.9" font-size="12" fill="#fff" text-anchor="middle">3</text>
<rect x="357.3" y="485.2" width="132" height="95.8" rx="12" fill="none" stroke="#3aa595" stroke-width="1.2"/>
<mask id="mcs" maskUnits="userSpaceOnUse" x="358.2" y="490.3" width="130.8" height="88.3"><rect x="370.2" y="502.3" width="106.8" height="64.3" fill="#fff" filter="url(#sf)"/></mask>
<g mask="url(#mcs)"><g filter="url(#bl)"><rect x="365.2" y="497.3" width="116.8" height="74.3" fill="#707070"/><rect x="364" y="496" width="118" height="76" fill="#6e6c6a"/><path d="M364,498 L482,498 L482,508 L364,514 Z" fill="#4e4640"/><path d="M364,510 L482,506 L482,512 L364,517 Z" fill="#2e2a28"/><rect x="368" y="520" width="26" height="48" fill="#8a8886"/><rect x="370" y="534" width="10" height="6" fill="#f0f0f0"/><path d="M396,518 L432,516 L434,568 L400,568 Z" fill="#e6e8ea"/><path d="M432,516 L474,515 L477,566 L434,568 Z" fill="#f2f3f4"/><circle cx="453.5" cy="541" r="9" fill="#2a4a8a"/><circle cx="453.5" cy="541" r="4.5" fill="#e6e8ea"/><path d="M408,532 L419,550 M419,532 L408,550" stroke="#2a4a8a" stroke-width="2.2"/><circle cx="413.5" cy="541" r="5" fill="none" stroke="#2a4a8a" stroke-width="1.2"/></g></g>
<text x="396.4" y="578.2" font-size="11" fill="#1a1a1a" stroke="#1a1a1a" stroke-width="0.2" text-anchor="start" textLength="58.5" lengthAdjust="spacingAndGlyphs" >Cold Storage</text>
<ellipse cx="373.7" cy="498.9" rx="8" ry="8" fill="#3a6cc6"/>
<text x="373.7" y="503.09999999999997" font-size="12" fill="#fff" text-anchor="middle">7</text>
<rect x="499.5" y="512.6" width="84" height="17.8" fill="#fff" stroke="#8ad0d8" stroke-width="0.9"/>
<text x="509" y="526.3" font-size="11" fill="#1a1a1a" stroke="#1a1a1a" stroke-width="0.2" text-anchor="start" textLength="64" lengthAdjust="spacingAndGlyphs" >Agri Produces</text>
<path d="M489.3,531.7 L598.7,531.7" stroke="#2a9f8a" stroke-width="2"/>
<rect x="598.7" y="500.3" width="94" height="80.7" rx="12" fill="none" stroke="#3aa595" stroke-width="1.2"/>
<mask id="mkt" maskUnits="userSpaceOnUse" x="594.7" y="504" width="105.3" height="66.4"><rect x="606.7" y="516" width="81.3" height="42.4" fill="#fff" filter="url(#sf)"/></mask>
<g mask="url(#mkt)"><g filter="url(#bl)"><rect x="601.7" y="511" width="91.3" height="52.4" fill="#847e72"/><rect x="600" y="510" width="92" height="54" fill="#8e887c"/><rect x="610" y="516" width="46" height="44" fill="#c6b8a2"/><rect x="610" y="516" width="46" height="4" fill="#9a8e80"/><rect x="614" y="524" width="8" height="6" fill="#5a5048"/><rect x="638" y="524" width="12" height="6" fill="#5a5048"/><rect x="638" y="534" width="12" height="5" fill="#6a6058"/><rect x="624" y="536" width="14" height="9" fill="#3a6ad0"/><rect x="620" y="550" width="22" height="8" fill="#a8a090"/><rect x="656" y="512" width="36" height="50" fill="#3e443c"/><circle cx="676" cy="530" r="8" fill="#4a5248"/><circle cx="684" cy="548" r="5" fill="#2a6a5a"/></g></g>
<text x="634.2" y="571.4" font-size="11" fill="#1a1a1a" stroke="#1a1a1a" stroke-width="0.2" text-anchor="start" textLength="34.8" lengthAdjust="spacingAndGlyphs" >Kitchen</text>
<ellipse cx="620.6" cy="513.1" rx="18.6" ry="8.2" fill="#3a6cc6"/>
<text x="620.6" y="517.3000000000001" font-size="12" fill="#fff" text-anchor="middle">8</text>
</svg></div>
  </div>

  <div class="tile" style="left:813px;top:73px">
    <div class="abs" style="left:42px;top:0;width:88px;height:142px;overflow:hidden;background:#ebe5e0">
      <svg width="88" height="142" viewBox="0 0 88 142" style="filter:blur(1.2px)">
        <rect width="88" height="142" fill="#ece6e1"/>
        <path d="M0,142 L0,100 Q10,82 40,78 Q60,76 72,80 Q86,86 88,100 L88,142 Z" fill="#f2e4d2"/>
        <path d="M20,92 Q45,110 80,86 L84,142 L14,142 Z" fill="#f6ebdd"/>
        <path d="M48,82 Q60,100 70,82 L68,72 L50,72 Z" fill="#e6bca4"/>
        <path d="M30,100 Q40,90 52,96 L48,120 L28,118 Z" fill="#f4d8cc"/>
        <ellipse cx="59" cy="54" rx="16" ry="19" fill="#e2b49a"/>
        <path d="M42,54 Q40,30 59,30 Q78,30 77,52 Q73,38 59,38 Q45,38 42,54 Z" fill="#4a342a"/>
        <path d="M53,68 Q59,71 65,68" stroke="#d86060" stroke-width="2.2" fill="none"/>
        <path d="M50,53 L55,53 M63,53 L68,53" stroke="#6a4a40" stroke-width="2"/>
      </svg>
    </div>
    <div class="name" style="left:16px;top:108px">Ramanjeet Kaur G...</div>
    <svg class="mic" viewBox="0 0 26 26"><circle cx="13" cy="13" r="13" fill="#2c2d30"/><path d="M11,8.5 A2,2 0 0 1 15,8.5 L15,13 A2,2 0 0 1 11,13 Z" fill="#fff"/><path d="M9,12.5 Q9,17 13,17 Q17,17 17,12.5 M13,17 L13,19.5" fill="none" stroke="#fff" stroke-width="1.3"/><path d="M7.5,7.5 L18.5,18.5" stroke="#2c2d30" stroke-width="2.6"/><path d="M7.5,7.5 L18.5,18.5" stroke="#fff" stroke-width="1.3"/></svg>
  </div>
  <div class="tile" style="left:996px;top:73px;background:#669df6">
    <div class="abs" style="left:4px;top:4px;width:163px;height:134px;border-radius:4px;overflow:hidden;background:#d6d6d4">
      <svg width="163" height="134" viewBox="0 0 163 134" style="filter:blur(1.4px)">
        <rect width="163" height="134" fill="#d7d7d5"/>
        <rect x="125" y="0" width="38" height="134" fill="#cdcecd"/>
        <path d="M8,134 Q14,110 50,102 L125,100 Q152,104 163,116 L163,134 Z" fill="#25272e"/>
        <path d="M74,134 L78,112 L96,112 L100,134 Z" fill="#c4beb6"/>
        <ellipse cx="88" cy="80" rx="28" ry="35" fill="#9a7864"/>
        <path d="M55,70 Q50,28 85,28 Q116,28 114,62 Q108,44 86,46 Q64,48 60,84 Z" fill="#24262b"/>
        <path d="M63,74 Q75,70 87,74 M91,74 Q103,70 115,73" stroke="#707074" stroke-width="2.5" fill="none"/>
        <path d="M76,94 Q88,90 100,94" stroke="#4a3228" stroke-width="4" fill="none"/>
        <path d="M112,78 Q132,72 148,84 Q162,98 156,112 L128,110 Q112,96 112,78 Z" fill="#ae8c78"/>
      </svg>
    </div>
    <svg class="abs" style="left:137px;top:8px" width="26" height="26" viewBox="0 0 26 26"><circle cx="13" cy="13" r="13" fill="#1a73e8"/><rect x="7" y="10" width="3" height="6" rx="1.5" fill="#fff"/><rect x="11.5" y="7" width="3" height="12" rx="1.5" fill="#fff"/><rect x="16" y="10" width="3" height="6" rx="1.5" fill="#fff"/></svg>
    <div class="name" style="left:16px;top:108px">Md Imran</div>
  </div>
  <div class="tile" style="left:1179px;top:73px">
    <div class="av" style="background:#004d40">M</div>
    <div class="name" style="left:12px;top:111px">Mani Dhaliwal</div>
    <svg class="mic" viewBox="0 0 26 26"><circle cx="13" cy="13" r="13" fill="#2c2d30"/><path d="M11,8.5 A2,2 0 0 1 15,8.5 L15,13 A2,2 0 0 1 11,13 Z" fill="#fff"/><path d="M9,12.5 Q9,17 13,17 Q17,17 17,12.5 M13,17 L13,19.5" fill="none" stroke="#fff" stroke-width="1.3"/><path d="M7.5,7.5 L18.5,18.5" stroke="#2c2d30" stroke-width="2.6"/><path d="M7.5,7.5 L18.5,18.5" stroke="#fff" stroke-width="1.3"/></svg>
  </div>

  <div class="tile" style="left:813px;top:227px;height:141px">
    <div class="av" style="background:#c0390b">G</div>
    <div class="name" style="left:12px;top:111px">Gurbhajan Singh</div>
    <svg class="mic" viewBox="0 0 26 26"><circle cx="13" cy="13" r="13" fill="#2c2d30"/><path d="M11,8.5 A2,2 0 0 1 15,8.5 L15,13 A2,2 0 0 1 11,13 Z" fill="#fff"/><path d="M9,12.5 Q9,17 13,17 Q17,17 17,12.5 M13,17 L13,19.5" fill="none" stroke="#fff" stroke-width="1.3"/><path d="M7.5,7.5 L18.5,18.5" stroke="#2c2d30" stroke-width="2.6"/><path d="M7.5,7.5 L18.5,18.5" stroke="#fff" stroke-width="1.3"/></svg>
  </div>
  <div class="tile" style="left:996px;top:227px;height:141px">
    <div class="av" style="background:#8023a8">K</div>
    <div class="name" style="left:12px;top:111px">007Sukhpreet Kaur</div>
    <svg class="mic" viewBox="0 0 26 26"><circle cx="13" cy="13" r="13" fill="#2c2d30"/><path d="M11,8.5 A2,2 0 0 1 15,8.5 L15,13 A2,2 0 0 1 11,13 Z" fill="#fff"/><path d="M9,12.5 Q9,17 13,17 Q17,17 17,12.5 M13,17 L13,19.5" fill="none" stroke="#fff" stroke-width="1.3"/><path d="M7.5,7.5 L18.5,18.5" stroke="#2c2d30" stroke-width="2.6"/><path d="M7.5,7.5 L18.5,18.5" stroke="#fff" stroke-width="1.3"/></svg>
  </div>
  <div class="tile" style="left:1179px;top:227px;height:141px">
    <svg class="abs" style="left:60px;top:45px" width="51" height="51" viewBox="0 0 51 51">
      <defs><clipPath id="csk"><circle cx="25.5" cy="25.5" r="25.5"/></clipPath><filter id="fsk"><feGaussianBlur stdDeviation="0.8"/></filter></defs>
      <g clip-path="url(#csk)"><g filter="url(#fsk)">
        <rect width="51" height="51" fill="#8a96a0"/>
        <path d="M0,10 Q20,18 51,8 L51,0 L0,0 Z" fill="#a8b4bc"/>
        <path d="M0,28 Q20,22 51,30 L51,51 L0,51 Z" fill="#6a7480"/>
        <path d="M36,32 Q46,24 50,16" stroke="#3a4048" stroke-width="1.5" fill="none"/>
        <path d="M15,5 L35,5 L36,18 L30,26 L38,40 L14,44 L18,28 L14,18 Z" fill="#5a6068"/>
        <path d="M20,26 L34,24 L36,42 L16,46 Z" fill="#1e2226"/>
        <circle cx="31" cy="20" r="3.5" fill="#ffb020"/><circle cx="31" cy="20" r="1.8" fill="#fff080"/>
        <circle cx="21" cy="20" r="1.5" fill="#d08030"/>
        <ellipse cx="18" cy="50" rx="16" ry="8" fill="#7a3020"/>
        <ellipse cx="33" cy="52" rx="13" ry="7" fill="#e8e4e0"/><ellipse cx="33" cy="52" rx="10" ry="4.5" fill="#6a3820"/>
      </g></g>
    </svg>
    <div class="name" style="left:12px;top:111px">Shiv kumar</div>
    <svg class="mic" viewBox="0 0 26 26"><circle cx="13" cy="13" r="13" fill="#2c2d30"/><path d="M11,8.5 A2,2 0 0 1 15,8.5 L15,13 A2,2 0 0 1 11,13 Z" fill="#fff"/><path d="M9,12.5 Q9,17 13,17 Q17,17 17,12.5 M13,17 L13,19.5" fill="none" stroke="#fff" stroke-width="1.3"/><path d="M7.5,7.5 L18.5,18.5" stroke="#2c2d30" stroke-width="2.6"/><path d="M7.5,7.5 L18.5,18.5" stroke="#fff" stroke-width="1.3"/></svg>
  </div>

  <div class="tile" style="left:813px;top:380px;height:141px">
    <div class="av" style="background:#689f38">L</div>
    <div class="name" style="left:12px;top:111px">Lovi</div>
    <svg class="mic" viewBox="0 0 26 26"><circle cx="13" cy="13" r="13" fill="#2c2d30"/><path d="M11,8.5 A2,2 0 0 1 15,8.5 L15,13 A2,2 0 0 1 11,13 Z" fill="#fff"/><path d="M9,12.5 Q9,17 13,17 Q17,17 17,12.5 M13,17 L13,19.5" fill="none" stroke="#fff" stroke-width="1.3"/><path d="M7.5,7.5 L18.5,18.5" stroke="#2c2d30" stroke-width="2.6"/><path d="M7.5,7.5 L18.5,18.5" stroke="#fff" stroke-width="1.3"/></svg>
  </div>
  <div class="tile" style="left:996px;top:380px;height:141px">
    <div class="abs" style="left:53px;top:38px;width:36px;height:36px;border-radius:50%;background:#5c6bc0;border:2px solid #2e2f32;color:#fff;font-size:20px;text-align:center;line-height:31px">d</div>
    <svg class="abs" style="left:84px;top:38px" width="36" height="36" viewBox="0 0 33 33">
      <defs><clipPath id="cot"><circle cx="16.5" cy="16.5" r="15"/></clipPath></defs>
      <circle cx="16.5" cy="16.5" r="16.5" fill="#36373a"/>
      <g clip-path="url(#cot)"><rect width="33" height="33" fill="#5a5050"/><rect x="0" y="0" width="33" height="12" fill="#7a6a68"/><path d="M4,33 L8,14 L14,14 L12,33Z" fill="#d8a0a0"/><path d="M16,33 L17,12 L25,12 L26,33Z" fill="#2a2a30"/><circle cx="21" cy="9" r="3.5" fill="#a07860"/><rect x="18" y="24" width="6" height="9" fill="#ddd"/></g>
    </svg>
    <div class="abs" style="left:0;top:85px;width:171px;text-align:center;color:#fff;font-size:14px;font-weight:bold">10 others</div>
  </div>
  <div class="tile" style="left:1179px;top:380px;height:141px">
    <svg class="abs" style="left:60px;top:45px" width="51" height="51" viewBox="0 0 51 51">
      <defs><clipPath id="cyo"><circle cx="25.5" cy="25.5" r="25.5"/></clipPath></defs>
      <g clip-path="url(#cyo)">
        <rect width="51" height="51" fill="#e8ddd2"/>
        <rect x="0" y="30" width="14" height="21" fill="#6a5a50"/>
        <path d="M10,51 Q14,32 26,32 Q40,32 44,51 Z" fill="#e9c8c4"/>
        <ellipse cx="27" cy="20" rx="8" ry="10" fill="#d8a890"/>
        <path d="M18,20 Q18,8 27,8 Q36,8 36,18 Q32,12 27,13 Q21,14 18,20Z" fill="#3a2a22"/>
        <path d="M14,30 Q18,18 22,26" stroke="#d8a890" stroke-width="4" fill="none"/>
      </g>
    </svg>
    <div class="name" style="left:12px;top:111px">You</div>
    <svg class="mic" viewBox="0 0 26 26"><circle cx="13" cy="13" r="13" fill="#2c2d30"/><path d="M11,8.5 A2,2 0 0 1 15,8.5 L15,13 A2,2 0 0 1 11,13 Z" fill="#fff"/><path d="M9,12.5 Q9,17 13,17 Q17,17 17,12.5 M13,17 L13,19.5" fill="none" stroke="#fff" stroke-width="1.3"/><path d="M7.5,7.5 L18.5,18.5" stroke="#2c2d30" stroke-width="2.6"/><path d="M7.5,7.5 L18.5,18.5" stroke="#fff" stroke-width="1.3"/></svg>
  </div>

  <!-- bottom bar -->
  <div class="abs" style="left:24px;top:552px;font-size:15.5px;font-weight:bold;color:#fff;white-space:nowrap">12:22 PM</div>
  <div class="abs" style="left:102px;top:555px;width:1px;height:13px;background:#fff"></div>
  <div class="abs" style="left:116px;top:552px;font-size:15px;font-weight:bold;color:#fff;white-space:nowrap;letter-spacing:0.9px">dzz-nkuo-trt</div>

  <svg class="abs" style="left:0;top:530px" width="1366" height="70">
    <circle cx="542" cy="31" r="20" fill="#ea4335"/>
    <circle cx="594" cy="31" r="20" fill="#ea4335"/>
    <circle cx="646" cy="31" r="20" fill="#3c4043"/>
    <circle cx="698" cy="31" r="20" fill="#3c4043"/>
    <circle cx="750" cy="31" r="20" fill="#3c4043"/>
    <rect x="782" y="11" width="56" height="40" rx="20" fill="#ea4335"/>
    <!-- mic off -->
    <path d="M540,26 A2,2 0 0 1 544,26 L544,31 A2,2 0 0 1 540,31 Z" fill="#fff"/>
    <path d="M537.5,30.5 Q537.5,35.5 542,35.5 Q546.5,35.5 546.5,30.5 M542,35.5 L542,38" fill="none" stroke="#fff" stroke-width="1.4"/>
    <path d="M535.5,24.5 L548.5,37.5" stroke="#ea4335" stroke-width="3"/><path d="M535.5,24.5 L548.5,37.5" stroke="#fff" stroke-width="1.5"/>
    <!-- cam off -->
    <rect x="586" y="26" width="12" height="10" rx="1" fill="none" stroke="#fff" stroke-width="1.6"/>
    <path d="M598,29.5 L602,27 L602,35 L598,32.5" fill="none" stroke="#fff" stroke-width="1.6"/>
    <path d="M585,23 L601,39" stroke="#ea4335" stroke-width="3.2"/><path d="M585,23 L601,39" stroke="#fff" stroke-width="1.6"/>
    <!-- cc -->
    <rect x="637" y="24" width="18" height="14" fill="none" stroke="#fff" stroke-width="1.8"/>
    <path d="M644.5,28.5 L641,28.5 L641,33.5 L644.5,33.5 M651.5,28.5 L648,28.5 L648,33.5 L651.5,33.5" fill="none" stroke="#fff" stroke-width="1.8"/>
    <!-- present -->
    <rect x="687.5" y="22.5" width="21" height="17" fill="none" stroke="#fff" stroke-width="1.9"/>
    <path d="M698,27 L702,31 L699.5,31 L699.5,34 L696.5,34 L696.5,31 L694,31 Z" fill="#fff"/>
    <!-- dots -->
    <circle cx="750" cy="24.5" r="2" fill="#fff"/><circle cx="750" cy="31" r="2" fill="#fff"/><circle cx="750" cy="37.5" r="2" fill="#fff"/>
    <!-- hangup -->
    <path d="M797.6,31.3 Q803,26 810,26 Q817,26 822.6,31.3 L819.5,35 Q817.5,35 815,33 L814.2,28.6 Q810,27.8 805.8,28.6 L805,33 Q802.5,35 800.5,35 Z" fill="#fff"/>
    <!-- right icons -->
    <circle cx="1180" cy="101" r="0" fill="none"/>
  </svg>
  <svg class="abs" style="left:1150px;top:530px" width="216" height="71">
    <circle cx="30" cy="31" r="9.5" fill="none" stroke="#fff" stroke-width="2"/>
    <rect x="29" y="29" width="2.2" height="6.5" fill="#fff"/><circle cx="30.1" cy="26" r="1.3" fill="#fff"/>
    <circle cx="75.5" cy="26.5" r="3.6" fill="none" stroke="#fff" stroke-width="2"/>
    <path d="M67,39 Q67,32.5 75.5,32.5 Q84,32.5 84,39 Z" fill="none" stroke="#fff" stroke-width="2"/>
    <path d="M81,23 A3.6,3.6 0 0 1 81,30 Z" fill="#fff"/><path d="M86,32.5 Q90,33.5 90,39 L86,39 Z" fill="#fff"/>
    <circle cx="88.7" cy="12" r="10" fill="#5f6368"/>
    <text x="88.7" y="15.8" font-family="Liberation Sans" font-weight="bold" font-size="10.5" fill="#fff" text-anchor="middle">19</text>
    <path d="M116,22 L136,22 L136,37 L120,37 L116,41 Z" fill="none" stroke="#fff" stroke-width="2" stroke-linejoin="round"/>
    <path d="M120,26.5 L132,26.5 M120,29.5 L132,29.5 M120,32.5 L129,32.5" stroke="#fff" stroke-width="1.6"/>
    <path d="M174,21.5 L178.5,29 L169.5,29 Z" fill="none" stroke="#fff" stroke-width="2" stroke-linejoin="round"/>
    <rect x="166" y="33" width="7" height="7" fill="none" stroke="#fff" stroke-width="2"/>
    <circle cx="181.5" cy="36.5" r="3.8" fill="none" stroke="#fff" stroke-width="2"/>
  </svg>
  <div class="abs" style="left:1073px;top:581px;font-size:19.3px;color:rgba(200,200,200,0.55);white-space:nowrap;letter-spacing:0.3px">Activate Windows</div>
</div>
<div id="shelf">
  <svg class="abs" style="left:0;top:0" width="1366" height="57">
    <rect x="20" y="21" width="16" height="16" rx="7" fill="#4a8cf7"/>
    <rect x="23.5" y="26" width="6.5" height="6" rx="1" fill="#fff"/><path d="M30.5,28 L33,26.2 L33,31.8 L30.5,30 Z" fill="#fff"/>
    <path d="M208,32 L213,27 L218,32" fill="none" stroke="#5f6368" stroke-width="1.5"/>
    <rect x="236" y="7" width="1" height="43" fill="#dadce0"/>
    <rect x="253" y="21" width="16" height="16" rx="7" fill="#4a8cf7"/>
    <rect x="256.5" y="26" width="6.5" height="6" rx="1" fill="#fff"/><path d="M263.5,28 L266,26.2 L266,31.8 L263.5,30 Z" fill="#fff"/>
    <path d="M441,32 L446,27 L451,32" fill="none" stroke="#5f6368" stroke-width="1.5"/>
    <rect x="469" y="7" width="1" height="43" fill="#dadce0"/>
    <rect x="1252.5" y="12.5" width="77" height="31" rx="4" fill="#fff" stroke="#dadce0"/>
    <path d="M1343.5,23.5 L1352.5,32.5 M1352.5,23.5 L1343.5,32.5" stroke="#5f6368" stroke-width="1.6"/>
  </svg>
  <div class="abs" style="left:49px;top:21px;font-size:12.3px;color:#3c4043;white-space:nowrap">Zoom_cm_ds_m9q....exe</div>
  <div class="abs" style="left:282px;top:21px;font-size:12.3px;color:#3c4043;white-space:nowrap">Zoom_cm_ds_mWj....exe</div>
  <div class="abs" style="left:1268px;top:20px;font-size:12.2px;color:#1a73e8;white-space:nowrap">Show all</div>
  <div class="abs" style="left:1073px;top:4px;font-size:15px;color:rgba(150,150,150,0.7);white-space:nowrap">Go to Settings to activate Windows.</div>
</div>
<div id="taskbar">
  <svg class="abs" style="left:0;top:0" width="1366" height="40">
    <defs>
      <g id="chr">
        <circle cx="0" cy="0" r="11" fill="#db4437"/>
        <path d="M0,0 L11,0 A11,11 0 0 1 -5.5,9.53 Z" fill="#0f9d58"/>
        <path d="M0,0 L-5.5,9.53 A11,11 0 0 1 -5.5,-9.53 Z" fill="#0f9d58"/>
        <path d="M0,0 L11,0 A11,11 0 0 1 -5.5,9.53 Z" fill="#ffcd40"/>
        <path d="M0,0 L-5.5,-9.53 A11,11 0 0 1 11,0 Z" fill="#db4437"/>
        <circle cx="0" cy="0" r="5" fill="#fff"/><circle cx="0" cy="0" r="4" fill="#4285f4"/>
      </g>
    </defs>
    <!-- windows logo -->
    <path d="M16,13.5 L22.8,12.5 L22.8,19.5 L16,19.5 Z M23.8,12.3 L32,11 L32,19.5 L23.8,19.5 Z M16,20.5 L22.8,20.5 L22.8,27.5 L16,26.5 Z M23.8,20.5 L32,20.5 L32,29 L23.8,27.7 Z" fill="#fff"/>
    <!-- task view -->
    <rect x="66.5" y="12.5" width="11" height="15" fill="none" stroke="#fff" stroke-width="1.2"/>
    <path d="M64,15 L62,15 L62,25 L64,25 M80,15 L82,15 L82,25 L80,25" fill="none" stroke="#fff" stroke-width="1.2"/>
    <!-- edge -->
    <path d="M113,21 Q113,10 123,10 Q134,10 134,21 L118,21 Q118,28 126,28 Q130,28 133,26 L133,30 Q129,32 124,32 Q113,32 113,21 Z M118,18 L129,18 Q128,14 123.5,14 Q119,14 118,18 Z" fill="#1e88e5"/>
    <rect x="102" y="38" width="40" height="2" fill="#f0e6b0"/>
    <!-- explorer -->
    <path d="M160,12 L168,12 L170,14 L183,14 L183,31 L160,31 Z" fill="#f9c94d"/>
    <rect x="160" y="17" width="23" height="14" fill="#ffd966"/>
    <rect x="168" y="22" width="8" height="6" fill="#1e88e5"/><rect x="165" y="27" width="14" height="2" fill="#1e88e5"/>
    <rect x="151" y="38" width="40" height="2" fill="#f0e6b0"/>
    <!-- store -->
    <path d="M211,15 L230,15 L230,32 L211,32 Z" fill="#fff"/>
    <path d="M216,15 L216,12 Q216,10 218,10 L223,10 Q225,10 225,12 L225,15" fill="none" stroke="#fff" stroke-width="1.5"/>
    <rect x="215" y="18.5" width="5" height="5" fill="#4a3c10"/><rect x="221" y="18.5" width="5" height="5" fill="#4a3c10"/>
    <rect x="215" y="24.5" width="5" height="5" fill="#4a3c10"/><rect x="221" y="24.5" width="5" height="5" fill="#4a3c10"/>
    <!-- webcam app -->
    <rect x="258" y="9" width="24" height="24" rx="3" fill="#111"/>
    <ellipse cx="270" cy="22" rx="9" ry="6" fill="none" stroke="#ddd" stroke-width="1.5"/>
    <circle cx="270" cy="20" r="4" fill="#aaa"/><circle cx="270" cy="20" r="2" fill="#222"/>
    <!-- puzzle -->
    <rect x="307" y="9" width="24" height="24" rx="2" fill="#0c0c0c"/>
    <rect x="310" y="13" width="7" height="7" fill="#e53935"/><rect x="318" y="12" width="7" height="8" fill="#43a047"/>
    <rect x="310" y="21" width="8" height="8" fill="#1e88e5"/><rect x="319" y="21" width="8" height="8" fill="#fdd835"/><rect x="323" y="16" width="5" height="5" fill="#fb8c00"/>
    <!-- hp -->
    <circle cx="368" cy="21" r="12" fill="#fff"/>
    <text x="368" y="26" font-family="Liberation Serif" font-style="italic" font-weight="bold" font-size="15" fill="#4a3c10" text-anchor="middle">hp</text>
    <!-- chrome -->
    <use href="#chr" x="417" y="21"/>
    <use href="#chr" x="466" y="21"/>
    <!-- mail -->
    <path d="M503,14 L527,14 L527,30 L503,30 Z" fill="#fff"/>
    <path d="M503,14 L515,23 L527,14" fill="none" stroke="#4a3c10" stroke-width="1.5"/>
    <!-- active chrome -->
    <rect x="540" y="0" width="48" height="40" fill="#8a7226"/>
    <use href="#chr" x="563" y="20"/>
    <circle cx="571" cy="27" r="6" fill="#c8a898"/><circle cx="571" cy="25" r="2.5" fill="#5a4030"/>
    <!-- word -->
    <rect x="609" y="11" width="15" height="20" fill="#fff"/>
    <path d="M612,15 L622,15 M612,18 L622,18 M612,21 L622,21 M612,24 L622,24 M612,27 L622,27" stroke="#2b579a" stroke-width="1"/>
    <rect x="600" y="13" width="14" height="16" fill="#2b579a"/>
    <text x="607" y="25" font-family="Liberation Sans" font-weight="bold" font-size="10" fill="#fff" text-anchor="middle">W</text>
    <rect x="592" y="38" width="40" height="2" fill="#f0e6b0"/>

    <!-- tray -->
    <circle cx="1064.5" cy="20" r="10.5" fill="#fff"/><circle cx="1064.5" cy="20" r="8.8" fill="#2a9ae0"/>
    <text x="1064.5" y="25.5" font-family="Liberation Sans" font-weight="bold" font-size="15" fill="#fff" text-anchor="middle">?</text>
    <circle cx="1071" cy="26" r="4.2" fill="#f5b400"/><rect x="1070.4" y="23.5" width="1.2" height="3.5" fill="#fff"/>
    <path d="M1085,24 L1091,18 L1097,24" fill="none" stroke="#fff" stroke-width="1.3"/>
    <rect x="1108.5" y="16.5" width="13" height="8" fill="none" stroke="#fff" stroke-width="1.2"/>
    <rect x="1110.5" y="18.5" width="5" height="4" fill="#fff"/><rect x="1122" y="18.5" width="1.5" height="4" fill="#fff"/>
    <path d="M1131,17.5 L1134,17.5 L1138,14 L1138,27 L1134,23.5 L1131,23.5 Z" fill="none" stroke="#fff" stroke-width="1.2"/>
    <path d="M1141,18 L1145,22 M1145,18 L1141,22" stroke="#fff" stroke-width="1.2"/>
    <path d="M1159,26 Q1159,14 1171,14 M1162,26 Q1162,17 1171,17 M1165,26 Q1165,20 1171,20" fill="none" stroke="#fff" stroke-width="1.1"/>
    <circle cx="1168.5" cy="24.5" r="1.8" fill="#fff"/>
    <rect x="1179.5" y="13.5" width="22" height="13" rx="1" fill="none" stroke="#fff" stroke-width="1.2"/>
    <path d="M1182,17 L1199,17 M1182,20 L1199,20 M1185,23.5 L1196,23.5" stroke="#fff" stroke-width="1.2" stroke-dasharray="1.2,1"/>
    <path d="M1325.5,12.5 L1340.5,12.5 L1340.5,25 L1333,25 L1329,29 L1329,25 L1325.5,25 Z" fill="#fff"/>
    <path d="M1328,16 L1338,16 M1328,19 L1338,19 M1328,22 L1335,22" stroke="#4a3c10" stroke-width="1"/>
    <circle cx="1340.5" cy="28" r="8" fill="#86702a" stroke="#4a3c10" stroke-width="1"/>
    <text x="1340.5" y="32" font-family="Liberation Sans" font-size="11" fill="#fff" text-anchor="middle">3</text>
  </svg>
  <div class="abs" style="left:1213px;top:13.5px;font-size:11.4px;color:#fff;white-space:nowrap">ENG</div>
  <div class="abs" style="left:1254.5px;top:4.5px;font-size:11.6px;color:#fff;white-space:nowrap;line-height:14px">12:22 PM</div>
  <div class="abs" style="left:1249px;top:22.5px;font-size:11.8px;color:#fff;white-space:nowrap;line-height:14px">27/04/2022</div>
</div>
</body></html>
